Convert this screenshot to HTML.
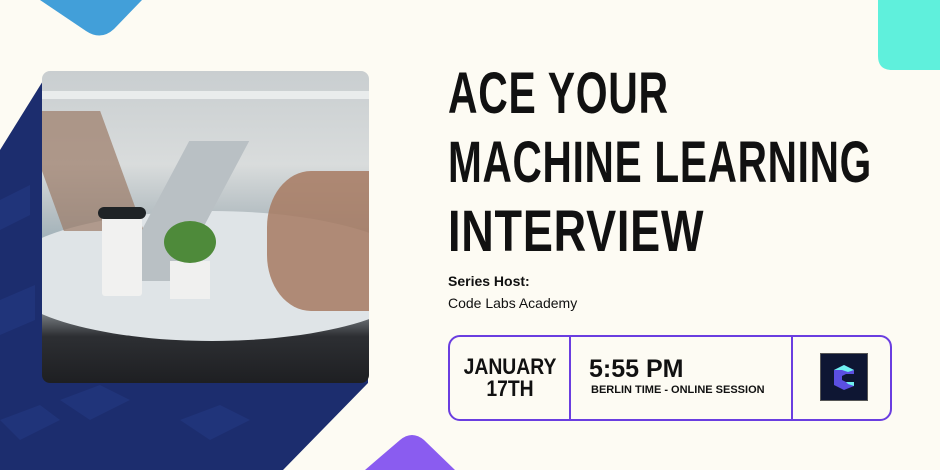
<!DOCTYPE html>
<html><head><meta charset="utf-8"><style>
*{margin:0;padding:0;box-sizing:border-box}
body{width:940px;height:470px;overflow:hidden;background:#fdfbf3;position:relative;font-family:"Liberation Sans",sans-serif}
.abs{position:absolute}
.title{position:absolute;left:448px;font-family:"Liberation Sans",sans-serif;font-weight:bold;font-size:58px;line-height:58px;color:#111;transform-origin:left top;white-space:nowrap;letter-spacing:1px}
</style></head><body>
<svg class="abs" style="left:0;top:0" width="940" height="470">
  <path d="M40,0 L142,0 L114,29 Q101,41 86,31 Z" fill="#429fd9"/>
  <path d="M878,0 L940,0 L940,70 L892,70 Q878,70 878,56 Z" fill="#5ff0dc"/>
  <path d="M365,470 L400,440 Q412,430 424,440 L455,470 Z" fill="#8a5cf0"/>
  <polygon points="0,150 46,76 368,76 368,383 283,470 0,470" fill="#1c2d6e"/>
  <g fill="#22367d" opacity="0.8">
    <polygon points="0,200 30,185 30,215 0,230"/>
    <polygon points="0,300 35,285 35,320 0,335"/>
    <polygon points="60,400 100,385 130,400 90,420"/>
    <polygon points="180,420 220,405 250,420 210,440"/>
    <polygon points="0,420 40,405 60,420 20,440"/>
  </g>
</svg>
<div class="abs" style="left:42px;top:71px;width:327px;height:312px;border-radius:8px;overflow:hidden;background:linear-gradient(180deg,#c9ced0 0%,#d9dcdc 30%,#b7c0c4 45%,#9fb0b8 55%,#c8d1d6 70%,#2d2f33 85%,#1e1f22 100%)">
  <div class="abs" style="left:-40px;top:140px;width:420px;height:130px;border-radius:50%;background:#dfe4e7"></div>
  <div class="abs" style="left:0;top:20px;width:327px;height:8px;background:#e9ecec"></div>
  <div class="abs" style="left:0;top:40px;width:80px;height:120px;background:#9b7a66;transform:skewX(20deg);opacity:.7"></div>
  <div class="abs" style="left:110px;top:70px;width:60px;height:140px;background:#b9c0c4;transform:skewX(-28deg)"></div>
  <div class="abs" style="left:60px;top:140px;width:40px;height:85px;background:#f1f1f0;border-radius:3px"></div>
  <div class="abs" style="left:56px;top:136px;width:48px;height:12px;background:#1f2326;border-radius:6px"></div>
  <div class="abs" style="left:128px;top:190px;width:40px;height:38px;background:#f0f0ef"></div>
  <div class="abs" style="left:122px;top:150px;width:52px;height:42px;background:#4e8a3a;border-radius:50%"></div>
  <div class="abs" style="left:225px;top:100px;width:110px;height:140px;background:#a77a62;border-radius:40% 0 0 40%;opacity:.85"></div>
</div>
<div class="title" style="top:65px;transform:scaleX(0.705)">ACE YOUR</div>
<div class="title" style="top:134px;transform:scaleX(0.70)">MACHINE LEARNING</div>
<div class="title" style="top:203px;transform:scaleX(0.776)">INTERVIEW</div>
<div class="abs" style="left:448px;top:273px;font-size:14px;font-weight:bold;color:#111">Series Host:</div>
<div class="abs" style="left:448px;top:295px;font-size:14px;color:#111">Code Labs Academy</div>
<div class="abs" style="left:448px;top:335px;width:444px;height:86px;border:2px solid #6a3de0;border-radius:12px"></div>
<div class="abs" style="left:569px;top:335px;width:2px;height:86px;background:#6a3de0"></div>
<div class="abs" style="left:791px;top:335px;width:2px;height:86px;background:#6a3de0"></div>
<div class="abs" style="left:450px;top:356px;width:120px;text-align:center;font-weight:bold;font-size:22px;line-height:22px;color:#111;transform:scaleX(0.88)">JANUARY<br>17TH</div>
<div class="abs" style="left:589px;top:356px;font-weight:bold;font-size:25px;line-height:26px;color:#111">5:55 PM</div>
<div class="abs" style="left:591px;top:384px;font-weight:bold;font-size:11px;color:#111">BERLIN TIME - ONLINE SESSION</div>
<div class="abs" style="left:820px;top:353px;width:48px;height:48px;background:#0e1633;border:1px solid #555"></div>
<svg class="abs" style="left:830px;top:362px" width="28" height="30">
  <path d="M4,8 L14,3 L24,8 L24,12 L16,12 L12,14 L12,18 L16,20 L24,20 L24,24 L14,28 L4,23 Z" fill="#5b4fe0"/>
  <path d="M4,8 L14,3 L24,8 L18,10 L12,8 Z" fill="#6ff0f0"/>
  <path d="M16,20 L24,20 L24,24 L18,22 Z" fill="#6ff0f0"/>
</svg>
</body></html>
